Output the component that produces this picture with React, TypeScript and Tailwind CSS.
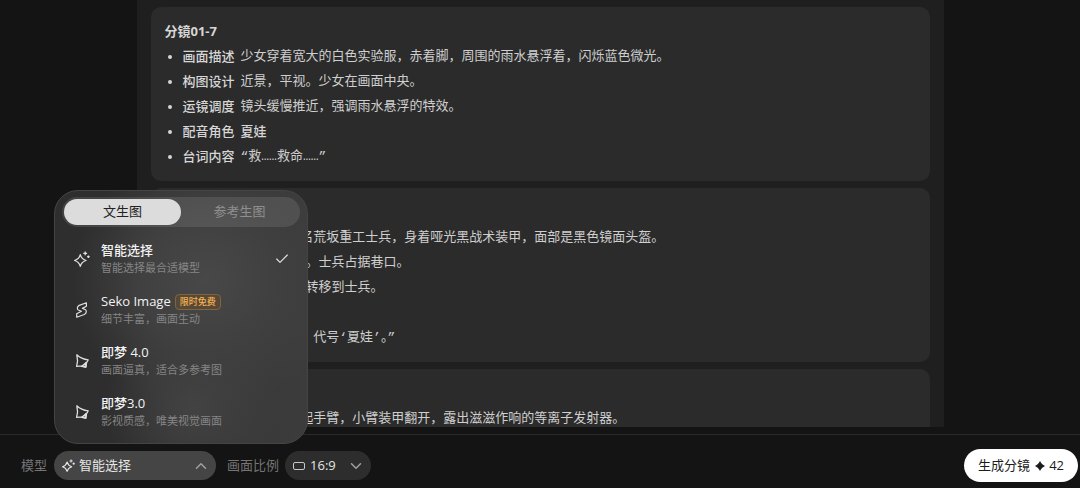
import { useState } from 'react';
import { Check, ChevronDown, ChevronUp } from 'lucide-react';

interface ShotField {
  label: string;
  text: string;
  strong?: boolean;
}

interface Shot {
  title: string;
  fields: ShotField[];
}

interface Model {
  id: string;
  name: string;
  desc: string;
  icon: 'sparkle' | 'seko' | 'jimeng';
  badge?: string;
}

const SHOTS: Shot[] = [
  {
    title: '分镜01-7',
    fields: [
      { label: '画面描述', text: '少女穿着宽大的白色实验服，赤着脚，周围的雨水悬浮着，闪烁蓝色微光。' },
      { label: '构图设计', text: '近景，平视。少女在画面中央。' },
      { label: '运镜调度', text: '镜头缓慢推近，强调雨水悬浮的特效。' },
      { label: '配音角色', text: '夏娃', strong: true },
      { label: '台词内容', text: '“救……救命……”' },
    ],
  },
  {
    title: '分镜01-8',
    fields: [
      { label: '画面描述', text: '巷口出现3名荒坂重工士兵，身着哑光黑战术装甲，面部是黑色镜面头盔。' },
      { label: '构图设计', text: '中景，平视。士兵占据巷口。' },
      { label: '运镜调度', text: '镜头从少女转移到士兵。' },
      { label: '配音角色', text: '士兵', strong: true },
      { label: '台词内容', text: '“发现目标，代号‘夏娃’。”' },
    ],
  },
  {
    title: '分镜01-9',
    fields: [
      { label: '画面描述', text: '3名士兵抬起手臂，小臂装甲翻开，露出滋滋作响的等离子发射器。' },
    ],
  },
];

const MODELS: Model[] = [
  { id: 'auto', name: '智能选择', desc: '智能选择最合适模型', icon: 'sparkle' },
  { id: 'seko', name: 'Seko Image', desc: '细节丰富，画面生动', icon: 'seko', badge: '限时免费' },
  { id: 'jimeng4', name: '即梦 4.0', desc: '画面逼真，适合多参考图', icon: 'jimeng' },
  { id: 'jimeng3', name: '即梦3.0', desc: '影视质感，唯美视觉画面', icon: 'jimeng' },
];

const TABS = ['文生图', '参考生图'];

function SparkleIcon({ className }: { className: string }) {
  return (
    <svg viewBox="0 0 16 16" fill="none" stroke="currentColor" strokeLinejoin="round" className={className}>
      <path
        d="M6.300 3.700c.9 3.300 2.300 4.800 5.700 5.800-3.400 1-4.800 2.500-5.700 5.800-.9-3.300-2.300-4.800-5.700-5.800 3.400-1 4.800-2.500 5.700-5.800z"
        strokeWidth="1.300"
      />
      <path d="M11.200.500v3.800M9.300 2.400h3.800M14.400 4.400v2.600M13.100 5.700h2.600" strokeWidth="1.300" />
    </svg>
  );
}

function SekoIcon({ className }: { className: string }) {
  return (
    <svg viewBox="0 0 16 16" fill="none" stroke="currentColor" strokeWidth="1.2" strokeLinejoin="round" className={className}>
      <path d="M12.400.8 5.200 3.400C3 4.600 2.800 7.200 4.400 8l3 1.200-4.700 2.500v3.500l7.600-2.700c2.400-1.300 2.600-4.100.9-5L8.400 6.400l4-2.100z" />
    </svg>
  );
}

function JimengIcon({ className }: { className: string }) {
  return (
    <svg viewBox="0 0 16 16" fill="none" stroke="currentColor" strokeWidth="1.3" strokeLinejoin="round" className={className}>
      <path d="M2.800 1.800c2.900 2.900 6.600 4.600 11.400 5.100-1.700 2-2.500 4.300-2.400 7.300-2.900-1.100-5.700-1.300-9.200-.8C3.700 9.800 3.900 5.900 2.800 1.800z" />
      <path d="M7.500 13.300c1.800-1 3.200-2.200 4.600-3.800l-.3 4.500z" fill="currentColor" fillOpacity=".5" />
    </svg>
  );
}

function ModelIcon({ icon }: { icon: Model['icon'] }) {
  if (icon === 'seko') return <SekoIcon className="size-4 shrink-0" />;
  if (icon === 'jimeng') return <JimengIcon className="size-4 shrink-0" />;
  return <SparkleIcon className="size-4 shrink-0" />;
}

function ShotRow({ label, text, strong = false }: ShotField) {
  return (
    <li className="marker:text-[11px]">
      <div className="flex gap-1.5">
        <span className="shrink-0 font-medium">{label}</span>
        <span
          className={
            strong
              ? 'font-medium'
              : "font-['Liberation_Mono','Noto_Sans_CJK_SC',monospace] text-[#cfcfcf]"
          }
        >
          {text}
        </span>
      </div>
    </li>
  );
}

function ShotCard({ shot }: { shot: Shot }) {
  return (
    <article className="shrink-0 rounded-[10px] bg-[#2b2b2b] px-3.5 py-3 text-[13px] leading-[25px] text-[#d6d6d6]">
      <h3 className="font-bold">{shot.title}</h3>
      <ul className="list-disc pl-[18px]">
        {shot.fields.map((f) => (
          <ShotRow key={f.label} {...f} />
        ))}
      </ul>
    </article>
  );
}

function ModelMenu({ selected, onSelect }: { selected: string; onSelect: (id: string) => void }) {
  const [tab, setTab] = useState(TABS[0]);

  return (
    <div className="absolute bottom-full left-0 mb-[7px] w-[254px] rounded-3xl border border-[#444] bg-[#303030] bg-[radial-gradient(circle_at_60%_35%,#484848_0%,#404040_30%,transparent_60%),radial-gradient(circle_at_55%_85%,#434343_0%,transparent_35%),linear-gradient(90deg,#2e2e2e_25%,#3c3c3c_100%)] px-[7px] py-1.5">
      <div role="tablist" className="flex rounded-full bg-white/10 p-0.5">
        {TABS.map((t) => (
          <button
            key={t}
            role="tab"
            aria-selected={tab === t}
            onClick={() => setTab(t)}
            className={`h-[26px] flex-1 rounded-full text-[13px] ${
              tab === t ? 'bg-[#dcdcdc] text-[#222]' : 'text-[#8f8f8f]'
            }`}
          >
            {t}
          </button>
        ))}
      </div>

      <div role="listbox" aria-label="模型" className="mt-1.5">
        {MODELS.map((m) => (
          <button
            key={m.id}
            role="option"
            aria-selected={selected === m.id}
            onClick={() => onSelect(m.id)}
            className="flex h-[51px] w-full items-center gap-[11px] pr-2.5 pl-3 text-left text-[#e0e0e0]"
          >
            <ModelIcon icon={m.icon} />
            <span className="flex-1">
              <span className="flex h-[18px] items-center gap-1 text-[13px] font-medium text-[#f2f2f2]">
                {m.name}
                {m.badge && (
                  <span className="rounded-sm border border-[#80643c] bg-[#57493a] px-1 text-[9px] leading-[14px] text-[#f7b24c]">
                    {m.badge}
                  </span>
                )}
              </span>
              <span className="block text-[11px] leading-4 text-[#858585]">{m.desc}</span>
            </span>
            {selected === m.id && <Check className="size-4" strokeWidth={1.75} />}
          </button>
        ))}
      </div>
    </div>
  );
}

export default function App() {
  const [model, setModel] = useState('auto');
  const current = MODELS.find((m) => m.id === model) ?? MODELS[0];

  return (
    <div className="flex h-screen flex-col bg-[#141414] font-['Open_Sans','Noto_Sans_CJK_SC',sans-serif]">
      <main className="flex min-h-0 flex-1 justify-center pb-[7px]">
        <div className="flex w-full max-w-[807px] flex-col gap-[7px] overflow-hidden bg-[#1f1f1f] px-3.5 pt-[7px]">
          {SHOTS.map((s) => (
            <ShotCard key={s.title} shot={s} />
          ))}
        </div>
      </main>

      <footer className="flex items-center border-t border-[#2a2a2a] pt-3.5 pr-0.5 pb-1.5 pl-[21px] text-[13px] text-[#757575]">
        <span id="model-label">模型</span>
        <div className="relative ml-[7px]">
          <button
            aria-labelledby="model-label"
            aria-haspopup="listbox"
            aria-expanded="true"
            className="flex h-[29px] w-[162px] items-center gap-1 rounded-full bg-[#454545] pr-1.5 pl-2 text-[#e6e6e6]"
          >
            <SparkleIcon className="size-[13px]" />
            <span className="flex-1 text-left">{current.name}</span>
            <ChevronUp className="size-[18px] text-[#a0a0a0]" strokeWidth={2} />
          </button>
          <ModelMenu selected={model} onSelect={setModel} />
        </div>

        <label htmlFor="ratio" className="ml-[11px]">
          画面比例
        </label>
        <div className="relative ml-1.5">
          <select
            id="ratio"
            className="block h-[29px] w-[86px] appearance-none rounded-full bg-[#2d2d2d] pr-6 pl-[25px] text-[#e6e6e6]"
          >
            <option>16:9</option>
            <option>9:16</option>
            <option>1:1</option>
          </select>
          <span className="pointer-events-none absolute inset-0 flex items-center justify-between pr-1.5 pl-2 text-[#c8c8c8]">
            <span className="h-2 w-3 rounded-[2px] border border-current" />
            <ChevronDown className="size-[18px] text-[#a0a0a0]" strokeWidth={2} />
          </span>
        </div>

        <button className="ml-auto flex h-[33px] items-center rounded-full bg-white px-3.5 text-[#1c1c1c]">
          生成分镜
          <svg viewBox="0 0 10 10" fill="currentColor" className="mr-1 ml-[5px] size-2.5">
            <path d="M5 0c1 2.200 2.800 4 5 5-2.200 1-4 2.800-5 5-1-2.200-2.800-4-5-5 2.200-1 4-2.800 5-5z" />
          </svg>
          42
        </button>
      </footer>
    </div>
  );
}
